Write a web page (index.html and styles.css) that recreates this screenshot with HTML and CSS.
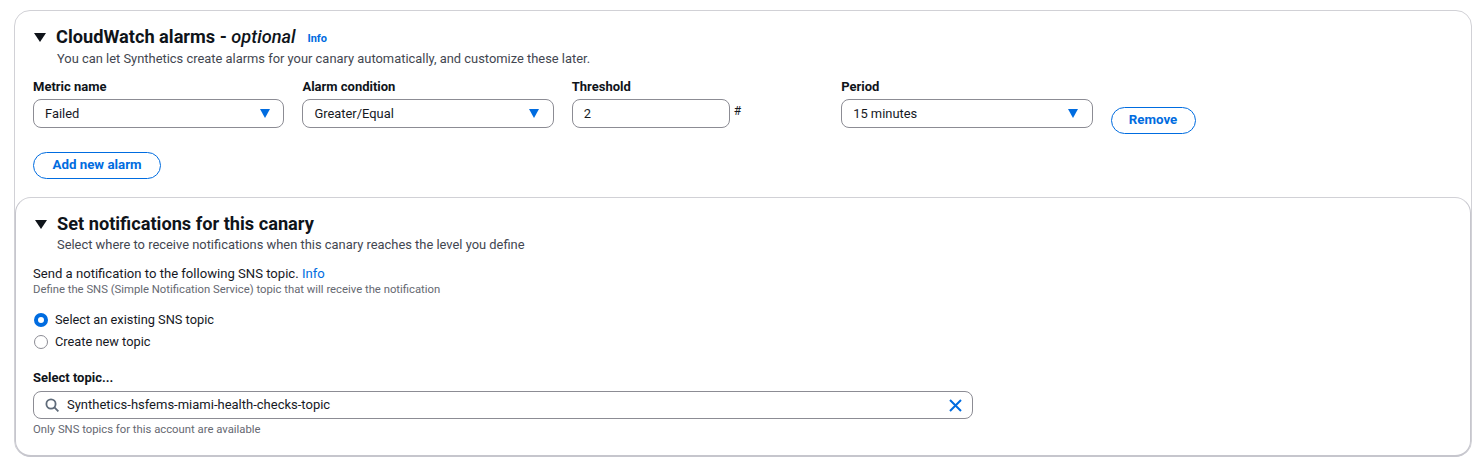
FILE: index.html
```html
<!DOCTYPE html>
<html>
<head>
	<title>CloudWatch alarms</title>
	<link rel="stylesheet" href="styles.css">
</head>
<body>

<div class="cnt">
	<section class="alarms">
		<div class="head">
			<svg class="caret" width="12" height="9" viewBox="0 0 12 9"><path d="M0 0h12L6 9z"/></svg>
			<h2>CloudWatch alarms - <i>optional</i></h2>
			<a class="info" href="#">Info</a>
		</div>
		<p class="sub">You can let Synthetics create alarms for your canary automatically, and customize these later.</p>

		<div class="fields">
			<div class="field">
				<label>Metric name</label>
				<div class="select">Failed
					<svg width="12" height="9" viewBox="0 0 12 9"><path d="M1 0h10L6 9z"/></svg>
				</div>
			</div>
			<div class="field">
				<label>Alarm condition</label>
				<div class="select">Greater/Equal
					<svg width="12" height="9" viewBox="0 0 12 9"><path d="M1 0h10L6 9z"/></svg>
				</div>
			</div>
			<div class="field">
				<label>Threshold</label>
				<div class="threshold">
					<div class="select short">2</div>
					<span>#</span>
				</div>
			</div>
			<div class="field">
				<label>Period</label>
				<div class="select">15 minutes
					<svg width="12" height="9" viewBox="0 0 12 9"><path d="M1 0h10L6 9z"/></svg>
				</div>
			</div>
			<button class="btn remove">Remove</button>
		</div>

		<button class="btn add">Add new alarm</button>
	</section>

	<section class="notify">
		<div class="head">
			<svg class="caret" width="12" height="9" viewBox="0 0 12 9"><path d="M0 0h12L6 9z"/></svg>
			<h2>Set notifications for this canary</h2>
		</div>
		<p class="sub">Select where to receive notifications when this canary reaches the level you define</p>

		<p class="send">Send a notification to the following SNS topic. <a href="#">Info</a></p>
		<p class="hint">Define the SNS (Simple Notification Service) topic that will receive the notification</p>

		<ul class="radios">
			<li><span class="radio on"></span>Select an existing SNS topic</li>
			<li><span class="radio"></span>Create new topic</li>
		</ul>

		<label>Select topic...</label>
		<div class="search">
			<svg width="14" height="14" viewBox="0 0 14 14" fill="none" stroke="#5f6b7a" stroke-width="1.8"><circle cx="6" cy="6" r="4.6"/><path d="M9.4 9.4L13.4 13.4"/></svg>
			<span>Synthetics-hsfems-miami-health-checks-topic</span>
			<svg class="clear" width="13" height="13" viewBox="0 0 13 13" fill="none" stroke="#006ce0" stroke-width="2"><path d="M1 1l11 11M12 1L1 12"/></svg>
		</div>
		<p class="hint below">Only SNS topics for this account are available</p>
	</section>
</div>

</body>
</html>
```

FILE: styles.css
```css
body {
	margin: 0;
	background-color: #fff;
	font-family: Roboto, sans-serif;
	font-size: 13px;
	line-height: 18px;
	color: #16191f;
}

p, h2, ul {
	margin: 0;
	padding: 0;
}

.cnt {
	margin: 10px 6px 0 14px;
	height: 447px;
	box-sizing: border-box;
	border: 1px solid #d1d1d6;
	border-radius: 16px;
	display: flex;
	flex-direction: column;
}

.alarms {
	height: 172px;
	padding: 14px 18px 0;
}

.alarms .sub {
	margin-top: 1px;
}

.notify {
	flex: 1;
	border: 1px solid #c6c6cd;
	border-top-color: #d1d1d6;
	border-bottom-width: 2px;
	border-radius: 16px;
	margin-bottom: -1px;
	padding: 14px 17px 0;
}

.head {
	display: flex;
	align-items: center;
	height: 24px;
}

.caret {
	margin-left: 1px;
	margin-right: 10px;
	fill: #0f141a;
}

.notify .caret {
	margin-left: 2px;
}

.head h2 {
	font-size: 18.2px;
	line-height: 24px;
	font-weight: 700;
	color: #0f141a;
}

.head h2 i {
	font-weight: 500;
}

.info {
	margin-left: 12px;
	margin-top: 3px;
	font-size: 11px;
	font-weight: 700;
	color: #006ce0;
	text-decoration: none;
}

.sub {
	margin-left: 24px;
	font-size: 12.9px;
	color: #424650;
}

.fields {
	display: flex;
	align-items: flex-start;
	margin-top: 10px;
}

.field {
	width: 251.4px;
	margin-right: 18px;
}

label {
	display: block;
	font-size: 13px;
	font-weight: 700;
	color: #0f141a;
	height: 18px;
}

.select {
	margin-top: 3px;
	height: 29px;
	box-sizing: border-box;
	padding: 0 12.5px 0 11px;
	border: 1px solid #8c8c94;
	border-radius: 8px;
	display: flex;
	align-items: center;
	justify-content: space-between;
	font-size: 12.9px;
}

.select svg {
	fill: #006ce0;
}

.threshold {
	display: flex;
	align-items: flex-start;
}

.select.short {
	width: 158px;
	margin-right: 4px;
}

.threshold span {
	margin-top: 6px;
	font-size: 12px;
}

.btn {
	box-sizing: border-box;
	height: 27px;
	border: 1px solid #006ce0;
	border-radius: 14px;
	background-color: #fff;
	color: #006ce0;
	font-family: Roboto, sans-serif;
	font-size: 13.3px;
	font-weight: 700;
	padding: 0 0 2px;
}

.remove {
	width: 85px;
	margin-top: 29px;
}

.add {
	display: block;
	width: 128px;
	margin-top: 18px;
}

.send {
	margin-top: 11px;
	font-size: 13.1px;
}

.send a {
	color: #006ce0;
	text-decoration: none;
}

.hint {
	font-size: 11.3px;
	line-height: 14px;
	color: #656871;
}

.radios {
	list-style: none;
	margin-top: 12px;
	margin-bottom: 16px;
}

.radios li {
	height: 22px;
	display: flex;
	align-items: center;
	font-size: 12.8px;
}

.radio {
	box-sizing: border-box;
	width: 14px;
	height: 14px;
	border: 1.5px solid #8c8c94;
	border-radius: 50%;
	margin-left: 1px;
	margin-right: 7px;
}

.radio.on {
	border: 4px solid #006ce0;
}

.search {
	margin-top: 4px;
	width: 940px;
	height: 28px;
	box-sizing: border-box;
	border: 1px solid #8c8c94;
	border-radius: 8px;
	padding: 0 10px 0 11px;
	display: flex;
	align-items: center;
	font-size: 13px;
}

.search span {
	margin-left: 8px;
	flex: 1;
}

.below {
	margin-top: 4px;
}
```
